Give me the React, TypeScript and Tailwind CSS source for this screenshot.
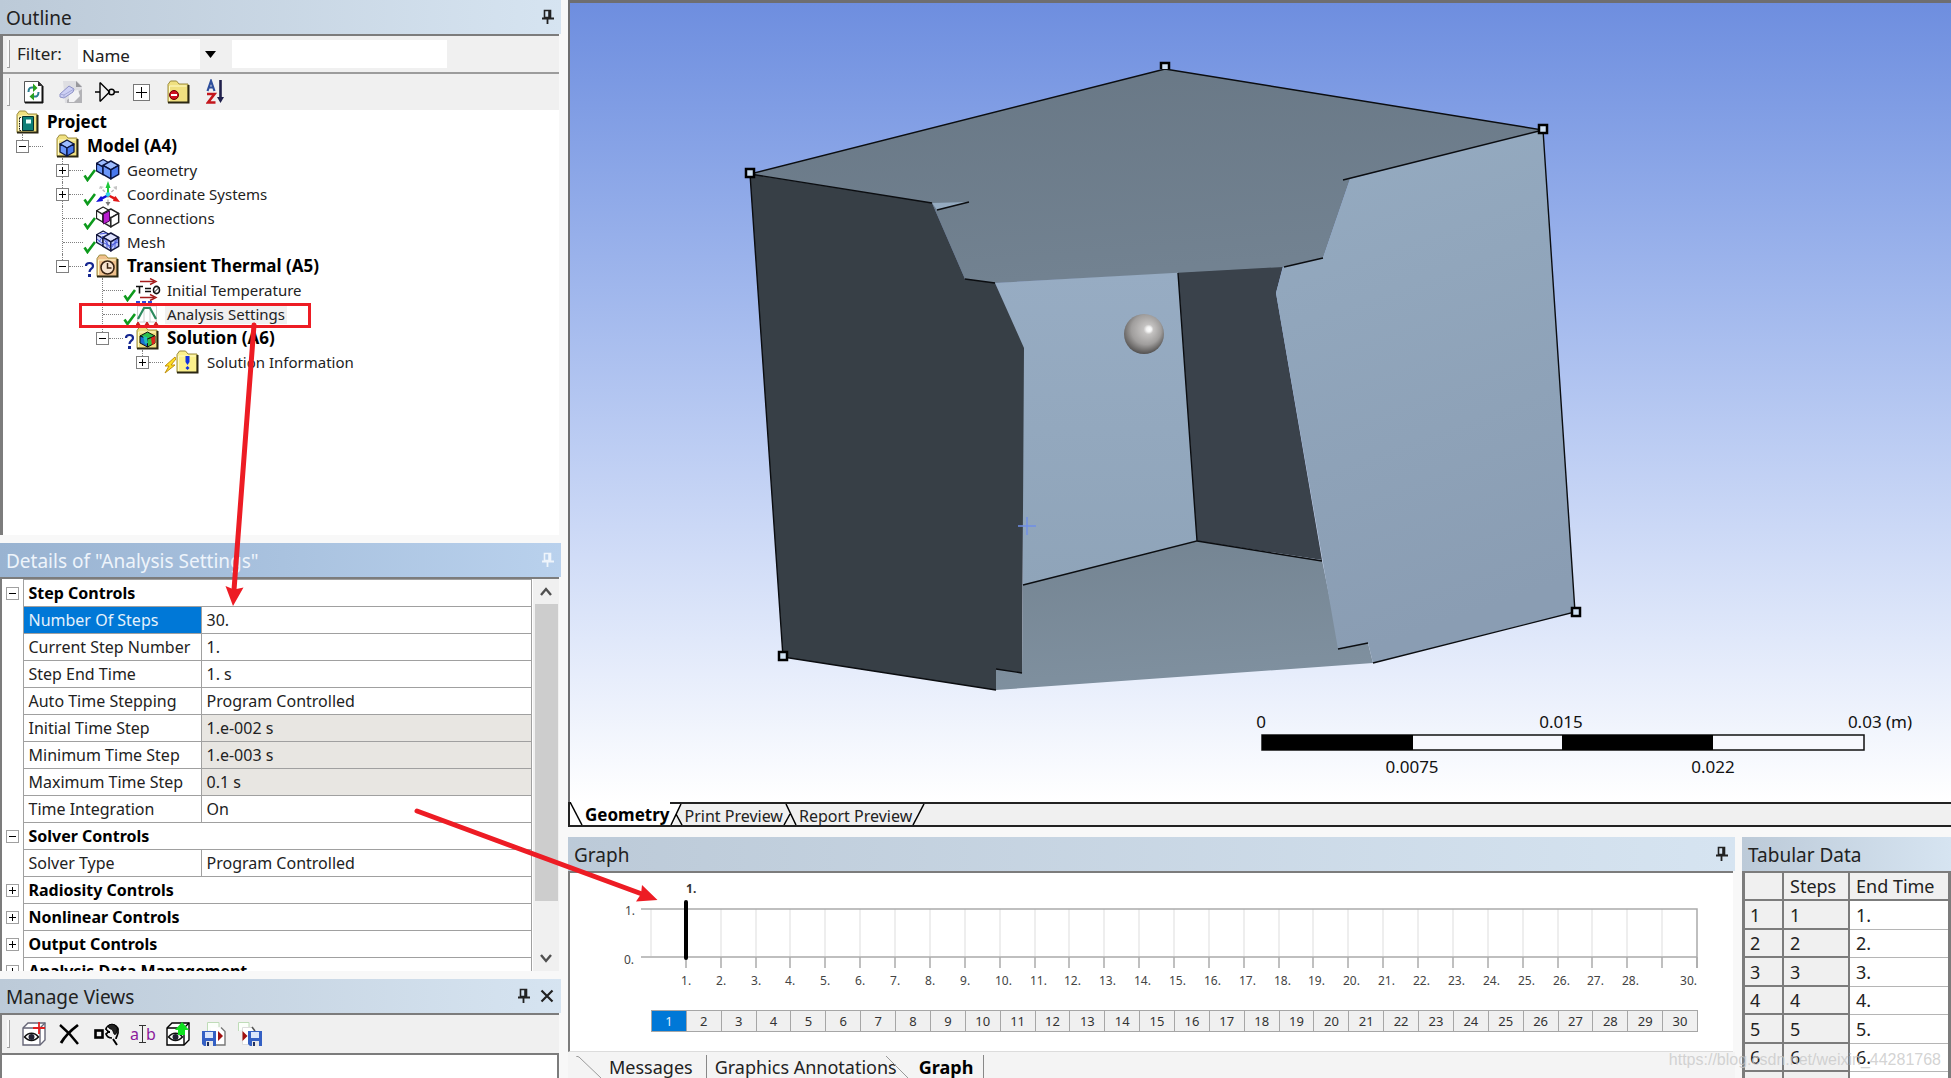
import { useState } from "react";

const UI = "font-['Noto_Sans','Noto_Sans_CJK_SC',sans-serif]";

const STEPS = Array.from({ length: 30 }, (_, i) => i + 1);

const PinIcon = () => (
  <svg width="12" height="16" viewBox="0 0 12 16" fill="none" stroke="currentColor">
    <path d="M2.5 1.5h6v7h-6z" strokeWidth="1.6" />
    <path d="M7.5 1v8" strokeWidth="2.6" />
    <path d="M0 9.5h12M5.5 10v5" strokeWidth="1.8" />
  </svg>
);

const CloseIcon = () => (
  <svg width="14" height="14" viewBox="0 0 14 14" stroke="currentColor" strokeWidth="2.2">
    <path d="M1.5 1.5l11 11M12.5 1.5l-11 11" />
  </svg>
);

const PanelTitle = ({ text, active, pin, close }: any) => (
  <div
    className={
      active
        ? "h-[34px] shrink-0 flex items-center gap-[10px] pl-[6px] pr-[7px] text-[#eef4fb] bg-linear-to-r from-[#99b3d1] to-[#b9d1ed]"
        : "h-[34px] shrink-0 flex items-center gap-[10px] pl-[6px] pr-[7px] text-[#222] bg-linear-to-r from-[#bccad8] to-[#d6e4f1]"
    }
  >
    <h2 className="flex-1 pt-[2px] text-[19px] leading-6 whitespace-nowrap">{text}</h2>
    {pin && (
      <button type="button" title="Pin">
        <PinIcon />
      </button>
    )}
    {close && (
      <button type="button" title="Close">
        <CloseIcon />
      </button>
    )}
  </div>
);

const Grip = () => (
  <div className="w-[3px] h-7 shrink-0 border-r border-b border-[#a0a0a0] bg-[#fafafa]" />
);

const Expander = ({ open, small }: any) => (
  <svg width="13" height="13" viewBox="0 0 13 13" className="relative shrink-0 block" shapeRendering="crispEdges">
    <rect x="0.5" y="0.5" width="12" height="12" fill="#fff" stroke={small ? "#a0a0a0" : "#808080"} />
    <path d={open ? "M3 6.5h7" : "M3 6.5h7M6.5 3v7"} stroke="#000" />
  </svg>
);

/* ---------- toolbar icons ---------- */

const RefreshIcon = () => (
  <svg width="24" height="24" viewBox="0 0 24 24" fill="none">
    <path d="M1.5 1.5h14l4 4v17h-18z" fill="#fff" stroke="#555" />
    <path d="M19.5 6v17M2 22.5h18" stroke="#111" strokeWidth="2" />
    <path d="M15 1v5h5z" fill="#333" />
    <path d="M5.5 12c0-4 2-5 5-4.5" stroke="#2a7f8f" strokeWidth="2" />
    <path d="M10 3.5l4.5 4.5-4.5 4z" fill="#2aa01e" />
    <path d="M15.5 12c0 4-2 5-5 4.5" stroke="#2a7f8f" strokeWidth="2" />
    <path d="M11 12.5l-4.5 4 4.5 4z" fill="#2aa01e" />
  </svg>
);

const EraserIcon = () => (
  <svg width="24" height="24" viewBox="0 0 24 24">
    <path d="M4 1h14l5 5v17H6z" fill="#dedee2" />
    <path d="M17 1v6h6z" fill="#97979c" />
    <path d="M8 23h15V9L8 20z" fill="#b2b2b6" />
    <path d="M10 22V12l9-2 2 6-6 6z" fill="#f2f2f4" />
    <path d="M1 14L10 6l5 3-1 3-9 6-4-1z" fill="#cdd0f4" stroke="#8c90c6" />
    <path d="M1 14l4 1 10-6M5 15v3" stroke="#a5a9d8" fill="none" />
  </svg>
);

const GateIcon = () => (
  <svg width="24" height="24" viewBox="0 0 24 24" fill="none" stroke="#000" strokeWidth="1.4">
    <path d="M0 12h5M5 2.5v19M5 2.5l9.5 9.5L5 21.5M19 12h5" />
    <circle cx="16.5" cy="12" r="2.8" />
  </svg>
);

const ExpandAllIcon = () => (
  <svg width="17" height="17" viewBox="0 0 17 17" shapeRendering="crispEdges">
    <rect x="0.5" y="0.5" width="16" height="16" fill="#fff" stroke="#777" />
    <path d="M3 8.5h11M8.5 3v11" stroke="#000" />
  </svg>
);

const Folder = ({ fill = "#f0e080", children }: any) => (
  <svg width="24" height="24" viewBox="0 0 24 24" className="block shrink-0">
    <path d="M1 22.5V4.5L3.5 1h6l2.5 3h9v18.5z" fill={fill} stroke="#9a8a3c" />
    <path d="M21.5 5v17.5H1" fill="none" stroke="#2b2712" strokeWidth="2" />
    <path d="M2.5 21V6h17" fill="none" stroke="#fffbc8" />
    {children}
  </svg>
);

const SortIcon = () => (
  <svg width="20" height="26" viewBox="0 0 20 26" fill="none">
    <path d="M1.5 12L5 2l3.5 10M3 8.5h4.5" stroke="#2f4f9c" strokeWidth="2.2" />
    <path d="M1 15h7.5l-6.5 8.5h7.5" stroke="#c4161c" strokeWidth="2.6" />
    <path d="M14.5 1v20" stroke="#20204c" strokeWidth="2.6" />
    <path d="M11 18h7l-3.5 6z" fill="#20204c" />
  </svg>
);

/* ---------- tree icons ---------- */

const Cube = ({ x = 0, y = 0, s = 1, top = "#9dbcff", left = "#6b97fa", right = "#4878ee", stroke = "#0a1440" }: any) => (
  <g transform={`translate(${x} ${y}) scale(${s})`} stroke={stroke} strokeWidth="1.3" strokeLinejoin="round">
    <path d="M0 4L7 0l7 4-7 4z" fill={top} />
    <path d="M0 4l7 4v8l-7-4z" fill={left} />
    <path d="M14 4L7 8v8l7-4z" fill={right} />
  </g>
);

const ProjectIcon = () => (
  <Folder>
    <path d="M3.5 7.5h3v13h-3z" fill="#fff" stroke="#222" strokeDasharray="1.5 1" />
    <path d="M6.5 6.5h11v14h-11z" fill="#0d7f78" stroke="#07302e" />
    <path d="M10 9.5h5v4h-5z" fill="#e6fffb" />
  </Folder>
);

const ModelIcon = () => (
  <Folder>
    <Cube x={4} y={6} s={1} />
  </Folder>
);

const GeometryIcon = () => (
  <svg width="24" height="24" viewBox="0 0 24 24">
    <Cube x={0.5} y={1.5} s={0.95} />
    <Cube x={7} y={3} s={1.12} />
  </svg>
);

const CoordIcon = () => (
  <svg width="24" height="26" viewBox="0 0 24 26" fill="none">
    <path d="M12 14L5 7M12 14l8-7M12 14v8" stroke="#b5b5b5" strokeWidth="1.3" strokeDasharray="3 1.5" />
    <path d="M3 8l1-3 4 1zM17 6l4-1v4z" fill="#c4c4c4" />
    <path d="M11 13V7h-1.5L12 0l2.5 7H13v6z" fill="#1fc83a" />
    <path d="M12 13l-6 3-1-1-5 6 7-1-.5-1.5 6.500-3.500z" fill="#1010d8" />
    <path d="M12 13l6.500 3 1-1 4.500 6-7-1 .5-1.500-6-3.500z" fill="#e01818" />
    <circle cx="12" cy="13.5" r="2.2" fill="#35d6e8" />
    <path d="M9.5 21h5L12 25z" fill="#777" />
  </svg>
);

const ConnectionsIcon = () => (
  <svg width="24" height="24" viewBox="0 0 24 24">
    <Cube x={0.5} y={1} s={0.95} top="#fff" left="#fff" right="#fff" stroke="#222" />
    <Cube x={7} y={3} s={1.12} top="#fff" left="#e2e2e2" right="#fff" stroke="#222" />
    <path d="M7.5 8l6-3v10l-6 3z" fill="#b91fd0" stroke="#4a0854" />
  </svg>
);

const MeshIcon = () => (
  <svg width="24" height="24" viewBox="0 0 24 24">
    <Cube x={0.5} y={1} s={0.95} top="#dfe3ff" left="#d0d6fd" right="#bcc5fb" stroke="#12163c" />
    <Cube x={7} y={3} s={1.12} top="#dfe3ff" left="#d0d6fd" right="#bcc5fb" stroke="#12163c" />
    <path d="M1 9l6 5M4 4l7-1M8 13l6 3M11 10v8M19 10v8M15 15l7-3M3 12l4-6M8 9l6 9M15 18l7-9" stroke="#4656d8" fill="none" />
  </svg>
);

const ThermalIcon = () => (
  <Folder fill="#efc08c">
    <circle cx="11.5" cy="13.5" r="6.5" fill="#f7e3cf" stroke="#3a2412" strokeWidth="1.6" />
    <path d="M11.5 9v5h4" fill="none" stroke="#3a2412" strokeWidth="1.5" />
  </Folder>
);

const InitialTempIcon = () => (
  <svg width="25" height="24" viewBox="0 0 25 24" fill="none">
    <path d="M4 3.5h14M4 19.5h14" stroke="#a51c1c" strokeWidth="1.4" />
    <path d="M14 .5l6 3-6 3M14 16.5l6 3-6 3" stroke="#a51c1c" strokeWidth="1.4" />
    <path d="M0 8.5h7M3.5 8.5v7M9 10.5h6M9 13.5h6" stroke="#111" strokeWidth="1.6" />
    <ellipse cx="20.5" cy="12" rx="3" ry="3.6" stroke="#111" strokeWidth="1.6" />
    <path d="M17.5 15l6-6" stroke="#111" />
  </svg>
);

const AnalysisIcon = () => (
  <svg width="24" height="26" viewBox="0 0 24 26" fill="none">
    <path d="M0 1h16" stroke="#2d4bd8" strokeWidth="2" strokeDasharray="4 2" />
    <path d="M1.5 5h19v16h-19zM8 5v16M14 5v16" stroke="#d0d0d0" />
    <path d="M2 18l6-11h6l6 11" stroke="#2c8a5e" strokeWidth="2.2" />
    <path d="M0 24l2-3 2 3zM9 24l2-3 2 3zM18 24l2-3 2 3z" fill="#c81e1e" stroke="#c81e1e" />
  </svg>
);

const SolutionIcon = () => (
  <Folder>
    <path d="M4 10l7.5-4 7.5 4-7.5 3z" fill="#2fc04a" stroke="#111" />
    <path d="M4 10l7.5 3v8L4 17z" fill="#1b6fd0" stroke="#111" />
    <path d="M19 10l-7.5 3v8l7.5-4z" fill="#37c23a" stroke="#111" />
    <path d="M15 12l4-2v7l-3 2z" fill="#d8261c" />
    <path d="M7 10l4 1 1 6-3 1z" fill="#20c0b8" />
  </Folder>
);

const InfoIcon = () => (
  <Folder fill="#fbf08c">
    <path d="M9.5 6h4v6l-2 3-2-3z" fill="#1030e0" />
    <path d="M11.5 16l2 2-2 2-2-2z" fill="#1030e0" />
  </Folder>
);

const CheckMark = () => (
  <svg width="13" height="24" viewBox="0 0 13 24" fill="none">
    <path d="M1.5 17.5l3 4.5L12 12" stroke="#0d9a1c" strokeWidth="2.6" />
  </svg>
);

const Question = () => (
  <svg width="13" height="24" viewBox="0 0 13 24" fill="none">
    <path d="M3 12c0-4 7-4 7 0 0 3-3.5 2.5-3.5 6" stroke="#14268f" strokeWidth="2.2" />
    <path d="M5 20h3v3H5z" fill="#14268f" />
  </svg>
);

const Bolt = () => (
  <svg width="13" height="24" viewBox="0 0 13 24">
    <path d="M12 7L2 16h4l-4 7 10-8H8l5-6z" fill="#ffdf20" stroke="#c09010" />
  </svg>
);

const statusIcons: any = { ok: <CheckMark />, todo: <Question />, bolt: <Bolt />, none: null };

const TREE = [
  { label: "Project", level: 0, icon: <ProjectIcon />, bold: true },
  { label: "Model (A4)", level: 1, icon: <ModelIcon />, bold: true, box: "open", last: true, status: "none" },
  { label: "Geometry", level: 2, icon: <GeometryIcon />, box: "closed", status: "ok" },
  { label: "Coordinate Systems", level: 2, icon: <CoordIcon />, box: "closed", status: "ok" },
  { label: "Connections", level: 2, icon: <ConnectionsIcon />, status: "ok" },
  { label: "Mesh", level: 2, icon: <MeshIcon />, status: "ok" },
  { label: "Transient Thermal (A5)", level: 2, icon: <ThermalIcon />, bold: true, box: "open", last: true, status: "todo" },
  { label: "Initial Temperature", level: 3, icon: <InitialTempIcon />, status: "ok" },
  { label: "Analysis Settings", level: 3, icon: <AnalysisIcon />, status: "ok", selected: true },
  { label: "Solution (A6)", level: 3, icon: <SolutionIcon />, bold: true, box: "open", last: true, status: "todo" },
  { label: "Solution Information", level: 4, icon: <InfoIcon />, box: "closed", last: true, status: "bolt" },
];

const TreeRow = ({ item }: any) => (
  <li className="h-6 flex items-center">
    {Array.from({ length: Math.max(item.level - 1, 0) }, (_, i) => (
      <span key={i} className="w-10 shrink-0" />
    ))}
    {item.level > 0 && (
      <span className="relative w-10 h-6 shrink-0 flex items-center">
        <span
          className={
            item.last
              ? "absolute left-[6px] top-0 h-3 border-l border-dotted border-[#808080]"
              : "absolute left-[6px] top-0 h-6 border-l border-dotted border-[#808080]"
          }
        />
        {item.box ? <Expander open={item.box === "open"} /> : <span className="w-[13px]" />}
        <span
          className={
            item.box
              ? "w-[14px] border-t border-dotted border-[#808080]"
              : "w-5 -ml-[6px] border-t border-dotted border-[#808080]"
          }
        />
        <span className="w-[13px]">{statusIcons[item.status]}</span>
      </span>
    )}
    <span className="w-[29px] shrink-0">{item.icon}</span>
    <span
      className={
        item.bold
          ? "px-[2px] text-[17px] leading-6 font-bold text-black whitespace-nowrap"
          : item.selected
            ? "px-[2px] text-[15px] leading-5 text-[#222] bg-[#f0f0f0] whitespace-nowrap"
            : "px-[2px] text-[15px] leading-6 text-[#222] whitespace-nowrap"
      }
    >
      {item.label}
    </span>
  </li>
);

const Outline = () => (
  <section className="flex-1 min-h-0 flex flex-col">
    <PanelTitle text="Outline" pin />
    <div className="mr-[2px] flex-1 min-h-0 flex flex-col border-l-3 border-t-2 border-[#7c7c7c] bg-white">
      <div className="h-[38px] shrink-0 flex items-center pl-1 bg-[#f0f0f0] border-b-2 border-[#9c9c9c]">
        <Grip />
        <label htmlFor="filter" className="w-[68px] pl-[7px] text-[17px] leading-6 text-[#222]">
          Filter:
        </label>
        <span className="relative flex">
          <select
            id="filter"
            className="w-[142px] h-[30px] pl-1 pt-1 bg-white text-[17px] leading-6 text-[#222] appearance-none outline-none"
          >
            <option>Name</option>
          </select>
          <span className="absolute right-0 top-0 h-[30px] w-5 bg-[#f0f0f0] flex items-center justify-center pointer-events-none">
            <svg width="11" height="7" viewBox="0 0 11 7">
              <path d="M0 0h11L5.5 7z" />
            </svg>
          </span>
        </span>
        <input type="text" aria-label="Filter text" className="ml-3 w-[215px] h-7 px-1 bg-white outline-none" />
      </div>
      <div className="h-[36px] shrink-0 flex items-center pl-1 bg-[#f0f0f0]">
        <Grip />
        <div className="flex items-center pl-[13px]">
          <button type="button" title="Refresh" className="w-9"><RefreshIcon /></button>
          <button type="button" title="Clear" className="w-9"><EraserIcon /></button>
          <button type="button" title="Filter" className="w-9"><GateIcon /></button>
          <button type="button" title="Expand" className="w-9 pl-[2px]"><ExpandAllIcon /></button>
          <button type="button" title="Hide folders" className="w-9">
            <Folder>
              <circle cx="7" cy="15" r="4.5" fill="#d01020" stroke="#600" />
              <path d="M4 15h6" stroke="#fff" strokeWidth="2" />
            </Folder>
          </button>
          <button type="button" title="Sort" className="w-9 pl-[3px]"><SortIcon /></button>
        </div>
      </div>
      <ul className="pl-[13px]">
        {TREE.map((item, index) => (
          <TreeRow key={index} item={item} />
        ))}
      </ul>
    </div>
  </section>
);

const DETAILS = [
  { group: "Step Controls", open: true },
  { name: "Number Of Steps", value: "30.", selected: true },
  { name: "Current Step Number", value: "1." },
  { name: "Step End Time", value: "1. s" },
  { name: "Auto Time Stepping", value: "Program Controlled" },
  { name: "Initial Time Step", value: "1.e-002 s", readOnly: true },
  { name: "Minimum Time Step", value: "1.e-003 s", readOnly: true },
  { name: "Maximum Time Step", value: "0.1 s", readOnly: true },
  { name: "Time Integration", value: "On" },
  { group: "Solver Controls", open: true },
  { name: "Solver Type", value: "Program Controlled" },
  { group: "Radiosity Controls" },
  { group: "Nonlinear Controls" },
  { group: "Output Controls" },
  { group: "Analysis Data Management" },
];

const Details = () => (
  <section className="h-[428px] shrink-0 flex flex-col">
    <PanelTitle text={'Details of "Analysis Settings"'} active pin />
    <div className="mr-[2px] flex-1 min-h-0 flex border-l-2 border-t-2 border-[#7c7c7c] bg-white overflow-hidden">
      <div className="flex-1 overflow-hidden">
        <table className="w-full table-fixed border-collapse text-[16px] leading-6 text-[#222]">
          <colgroup>
            <col className="w-[21px]" />
            <col className="w-[178px]" />
            <col />
          </colgroup>
          <tbody>
            {DETAILS.map((row: any, index) =>
              row.group ? (
                <tr key={index} className="h-[27px]">
                  <td className="p-0 pl-1"><Expander open={row.open} small /></td>
                  <td colSpan={2} className="p-0 pl-[5px] border border-[#a0a0a0] font-bold text-black whitespace-nowrap">
                    {row.group}
                  </td>
                </tr>
              ) : (
                <tr key={index} className="h-[27px]">
                  <td className="p-0" />
                  <td
                    className={
                      row.selected
                        ? "p-0 pl-[5px] border border-[#a0a0a0] bg-[#0078d7] text-[#e4f1fc] whitespace-nowrap"
                        : "p-0 pl-[5px] border border-[#a0a0a0] whitespace-nowrap"
                    }
                  >
                    {row.name}
                  </td>
                  <td
                    className={
                      row.readOnly
                        ? "p-0 pl-[5px] border border-[#a0a0a0] bg-[#e8e6e2] whitespace-nowrap"
                        : "p-0 pl-[5px] border border-[#a0a0a0] whitespace-nowrap"
                    }
                  >
                    {row.value}
                  </td>
                </tr>
              )
            )}
          </tbody>
        </table>
      </div>
      <div className="w-[26px] ml-[1px] shrink-0 flex flex-col items-center bg-[#f0f0f0]">
        <button type="button" title="Scroll up" className="h-[25px]">
          <svg width="12" height="9" viewBox="0 0 12 9" fill="none" stroke="#505050" strokeWidth="2.4">
            <path d="M1 8l5-6 5 6" />
          </svg>
        </button>
        <div className="h-[297px] w-[23px] bg-[#cdcdcd]" />
        <button type="button" title="Scroll down" className="mt-auto h-[25px]">
          <svg width="12" height="9" viewBox="0 0 12 9" fill="none" stroke="#505050" strokeWidth="2.4">
            <path d="M1 1l5 6 5-6" />
          </svg>
        </button>
      </div>
    </div>
  </section>
);

/* ---------- manage views icons ---------- */

const ViewBox = ({ stroke = "#667", children }: any) => (
  <svg width="24" height="24" viewBox="0 0 24 24" fill="none">
    <path d="M1 6l5-5h17v17l-5 5H1z" fill="#fff" stroke={stroke} strokeWidth="1.4" />
    <path d="M1 6h17v17M18 6l5-5" stroke={stroke} strokeWidth="1.4" />
    <path d="M2.5 15c4-5 10-5 14 0-4 4.5-10 4.5-14 0z" stroke="#111" strokeWidth="1.5" />
    <circle cx="9.5" cy="15" r="3" fill="#223" />
    {children}
  </svg>
);

const Floppy = ({ x }: any) => (
  <g transform={`translate(${x} 9)`}>
    <path d="M0 0h14v15H2l-2-2z" fill="#3460c4" />
    <path d="M3 1h8v6H3z" fill="#dbe6fb" />
    <path d="M4 10h7v5H4z" fill="#e8e8e8" />
    <path d="M5 11h2v4H5z" fill="#203060" />
  </g>
);

const ExportIcon = () => (
  <svg width="24" height="24" viewBox="0 0 24 24">
    <path d="M5.5 9V.5H17V5" fill="#fbfffa" stroke="#bfdcb8" />
    <path d="M9 5.5h10l4 4v13.5H9z" fill="#fff" />
    <path d="M19 5.5l4 4v13.5H13" fill="none" stroke="#777" strokeWidth="1.4" />
    <Floppy x={0} />
    <path d="M16 9l5 5-5 5z" fill="#a01010" />
  </svg>
);

const ImportIcon = () => (
  <svg width="24" height="24" viewBox="0 0 24 24">
    <path d="M.5 9V.5H11V5" fill="#fbfffa" stroke="#bfdcb8" />
    <path d="M4.5 5.5H14l3 4v13H4.5z" fill="#fff" stroke="#ddd" />
    <path d="M14 5l3 4" stroke="#555" strokeWidth="1.6" />
    <Floppy x={10} />
    <path d="M4.5 9l5 5-5 5z" fill="#a01010" />
  </svg>
);

const ManageViews = () => (
  <section className="h-[99px] shrink-0 flex flex-col">
    <PanelTitle text="Manage Views" pin close />
    <div className="mr-[2px] flex-1 flex flex-col border-l-2 border-t-2 border-[#7c7c7c] bg-[#f0f0f0]">
      <div className="h-[38px] shrink-0 flex items-center pl-[5px]">
        <Grip />
        <div className="flex items-center pl-3">
          <button type="button" title="Create a view" className="w-9">
            <ViewBox>
              <path d="M17 0v12M11 6h12" stroke="#e02020" strokeWidth="1.8" />
            </ViewBox>
          </button>
          <button type="button" title="Delete a view" className="w-9">
            <svg width="24" height="24" viewBox="0 0 24 24" fill="none" stroke="#000">
              <path d="M2 3c6 5 12 11 18 19" strokeWidth="2.4" />
              <path d="M20 3C12 9 7 14 3 21" strokeWidth="2.8" />
            </svg>
          </button>
          <button type="button" title="Apply a view" className="w-9">
            <svg width="26" height="24" viewBox="0 0 26 24" fill="none" stroke="#000">
              <rect x="1.5" y="8.5" width="7" height="7" strokeWidth="2.6" />
              <path d="M12 8c0-7 12-7 12 0 1 5-2 6-2 9M12 8c3 0 2 3 0 4 1 3 4 4 6 4" strokeWidth="1.7" />
              <path d="M14 4c4-4 10-1 9 6-2 4-3 3-4-1-1-3-4-1-5-5z" fill="#222" />
              <path d="M19 17l4 6M13 10h3" strokeWidth="2" />
            </svg>
          </button>
          <button type="button" title="Rename" className="w-9 text-[16px] leading-6 text-[#8b1a9b] flex items-center">
            a
            <svg width="7" height="20" viewBox="0 0 7 20" stroke="#333" fill="none">
              <path d="M0 1.5h7M3.5 1.5v17M0 18.5h7" />
            </svg>
            b
          </button>
          <button type="button" title="Replace view" className="w-9">
            <ViewBox stroke="#000">
              <path d="M12 13V8H9l7-8 7 8h-4v5z" fill="#10e020" />
            </ViewBox>
          </button>
          <button type="button" title="Export" className="w-9"><ExportIcon /></button>
          <button type="button" title="Import" className="w-9"><ImportIcon /></button>
        </div>
      </div>
      <div className="flex-1 border-t-2 border-r-2 border-[#7c7c7c] bg-white" />
    </div>
  </section>
);

/* ---------- 3D viewport ---------- */

const Vertex = ({ x, y }: any) => (
  <rect x={x - 4} y={y - 4} width="8" height="8" fill="#cfe0f2" stroke="#000" strokeWidth="2.5" />
);

const Viewport = () => (
  <div className="flex-1 min-h-0 border-l-2 border-t-3 border-[#6e6e70] bg-linear-to-b from-[#6e8edf] to-white overflow-hidden">
    <svg width="1381" height="799" viewBox="570 3 1381 799" className="block max-w-none">
      <defs>
        <linearGradient id="topFace" x1="0" y1="0" x2="0.3" y2="1">
          <stop offset="0" stopColor="#687785" />
          <stop offset="1" stopColor="#728291" />
        </linearGradient>
        <linearGradient id="sideFace" x1="0" y1="0" x2="0.2" y2="1">
          <stop offset="0" stopColor="#95abc1" />
          <stop offset="1" stopColor="#8a9db3" />
        </linearGradient>
        <linearGradient id="backWall" x1="0" y1="0" x2="0" y2="1">
          <stop offset="0" stopColor="#97acc3" />
          <stop offset="1" stopColor="#8fa4b9" />
        </linearGradient>
        <linearGradient id="floor" x1="0" y1="0" x2="0.2" y2="1">
          <stop offset="0" stopColor="#748492" />
          <stop offset="1" stopColor="#7f909f" />
        </linearGradient>
        <radialGradient id="ball" cx="0.5" cy="0.4" r="0.62" fx="0.64" fy="0.38">
          <stop offset="0" stopColor="#ffffff" />
          <stop offset="0.1" stopColor="#f4f4f4" />
          <stop offset="0.2" stopColor="#c4c2c1" />
          <stop offset="0.6" stopColor="#a09e9d" />
          <stop offset="1" stopColor="#4c4a49" />
        </radialGradient>
      </defs>
      <path d="M995 283L1178 272L1197 541L1023 585V348z" fill="url(#backWall)" />
      <path d="M1178 272L1283 266L1276 293L1322 560L1197 541z" fill="#3a424b" />
      <path d="M1197 541L1023 585L1022 673L996 669V690L1373 663L1368 643L1340 649L1322 560z" fill="url(#floor)" />
      <path d="M750 174L1165 69L1543 130L1350 179L1323 258L1283 267L995 283L965 279L932 203z" fill="url(#topFace)" />
      <path d="M932 203L969 202L937 210z" fill="#95abc1" />
      <path d="M750 174L932 203L965 279L995 283L1024 348L1022 673L996 669V690L783 657z" fill="#373f46" />
      <path d="M1543 130L1350 179L1323 258L1283 267L1276 293L1338 649L1368 643L1373 663L1575 612z" fill="url(#sideFace)" />
      <path
        d="M783 657L750 174L1165 69L1543 130L1575 612L1373 663M750 174L932 203M937 210L969 202M965 279L995 283M1543 130L1343 180M1323 258L1284 267M1178 273L1197 541L1023 585M1197 541L1322 561M1022 673L996 669M783 657L996 690M1338 649L1368 643"
        fill="none"
        stroke="#0b0d10"
        strokeWidth="1.4"
      />
      <circle cx="1144" cy="334" r="20" fill="url(#ball)" />
      <path d="M1018 526h18M1027 517v18" stroke="#6f8fe8" strokeWidth="1.4" />
      <Vertex x={750} y={173} />
      <path d="M1161 69v-6h8v6" fill="#cfe0f2" stroke="#000" strokeWidth="2.5" />
      <Vertex x={1543} y={129} />
      <Vertex x={783} y={656} />
      <Vertex x={1576} y={612} />
      <rect x="1262" y="735" width="602" height="15" fill="#f7f8fe" stroke="#111" strokeWidth="1.5" />
      <path d="M1262 735h151v15h-151zM1562 735h151v15h-151z" />
      <g fontSize="17" textAnchor="middle" fill="#111" className="font-['Noto_Sans',sans-serif]">
        <text x="1261" y="728">0</text>
        <text x="1561" y="728">0.015</text>
        <text x="1880" y="728">0.03 (m)</text>
        <text x="1412" y="773">0.0075</text>
        <text x="1713" y="773">0.022</text>
      </g>
    </svg>
  </div>
);

const ViewTabs = () => (
  <div className="h-[25px] shrink-0 flex items-stretch border-y-2 border-l-2 border-[#222] bg-[#f0f0f0]">
    <svg width="15" height="23" viewBox="0 0 15 23" fill="none" stroke="#000" strokeWidth="1.5" className="-mt-[2px] bg-white">
      <path d="M0 0l12 23" />
    </svg>
    <button type="button" className="-mt-[2px] pt-[2px] bg-white text-[17px] leading-5 font-bold text-black">
      Geometry
    </button>
    <svg width="15" height="21" viewBox="0 0 15 21" fill="none" stroke="#000" strokeWidth="1.5">
      <path d="M0 0h11L3 21H0z" fill="#fff" stroke="none" />
      <path d="M1 21L11 0M6 10l6 11" />
    </svg>
    <button type="button" className="text-[16px] leading-6 text-[#222] whitespace-nowrap">Print Preview</button>
    <svg width="16" height="21" viewBox="0 0 16 21" fill="none" stroke="#000" strokeWidth="1.5">
      <path d="M3 0l10 21M1 21L7 10" />
    </svg>
    <button type="button" className="text-[16px] leading-6 text-[#222] whitespace-nowrap">Report Preview</button>
    <svg width="16" height="21" viewBox="0 0 16 21" fill="none" stroke="#000" strokeWidth="1.5">
      <path d="M1 21L12 0" />
    </svg>
  </div>
);

/* ---------- graph ---------- */

const X0 = 81;
const STEP = 1046 / 30;
const at = (n: number) => Math.round(X0 + n * STEP);

const Graph = ({ current, setCurrent }: any) => (
  <section className="flex-1 min-w-0 flex flex-col">
    <PanelTitle text="Graph" pin />
    <div className="mr-[2px] h-[181px] shrink-0 border-l-2 border-t-2 border-b border-b-[#dcdcdc] border-[#7c7c7c] bg-white overflow-hidden">
      <svg width="1160" height="137" viewBox="0 0 1160 137" className="block max-w-none">
        <g stroke="#e9e9e9" strokeWidth="1.5">
          {STEPS.map((n) => (
            <path key={n} d={`M${at(n - 1)} 36v47`} />
          ))}
        </g>
        <path d={`M71 36H${at(30)}V95M71 84H${at(30)}`} fill="none" stroke="#ababab" strokeWidth="1.5" />
        <g stroke="#ababab" strokeWidth="1.5">
          {STEPS.map((n) => (
            <path key={n} d={`M${at(n)} 84v11`} />
          ))}
        </g>
        <path d={`M${at(current)} 29v56`} stroke="#000" strokeWidth="4" strokeLinecap="round" />
        <g fontSize="12" fill="#444" className="font-['Noto_Sans',sans-serif]">
          <text x={at(current)} y="20" fontWeight="bold" fill="#333">{current}.</text>
          <text x="55" y="42">1.</text>
          <text x="54" y="91">0.</text>
          {STEPS.filter((n) => n !== 29).map((n) => (
            <text key={n} x={n === 30 ? at(n) : at(n) - 5} y="112" textAnchor={n === 30 ? "end" : "start"}>
              {n}.
            </text>
          ))}
        </g>
      </svg>
      <div className="ml-[81px] w-[1047px] h-[22px] grid grid-cols-[repeat(30,minmax(0,1fr))] border-l border-y border-[#a6a6a6]">
        {STEPS.map((n) => (
          <button
            key={n}
            type="button"
            onClick={() => setCurrent(n)}
            className={
              n === current
                ? "bg-[#0078d7] text-[#e4f1fc] text-[13px] leading-5 border-r border-[#a6a6a6]"
                : "bg-[#f0f0f0] text-[#333] text-[13px] leading-5 border-r border-[#a6a6a6]"
            }
          >
            {n}
          </button>
        ))}
      </div>
    </div>
    <div className="flex-1 min-h-0 flex items-center pt-1 bg-[#f4f4f4] text-[18px] leading-6 text-[#222] whitespace-nowrap">
      <svg width="41" height="22" viewBox="0 0 41 22" fill="none" stroke="#999">
        <path d="M8 0l3 1 22 21" />
      </svg>
      <button type="button" className="h-6 pr-[13px] border-r border-[#888]">Messages</button>
      <button type="button" className="h-6 pl-2">Graphics Annotations</button>
      <svg width="26" height="22" viewBox="0 0 26 22" fill="none" stroke="#999" className="-ml-[12px]">
        <path d="M1 0l22 22" />
      </svg>
      <button type="button" className="h-6 pl-2 pr-[10px] border-r border-[#888] font-bold text-black">Graph</button>
    </div>
  </section>
);

const TabularData = () => (
  <section className="w-[209px] shrink-0 flex flex-col overflow-hidden">
    <PanelTitle text="Tabular Data" />
    <div className="flex-1 border-l-3 border-t-2 border-r-3 border-[#7c7c7c]">
      <table className="w-full table-fixed border-collapse text-[18px] leading-6 text-[#222]">
        <colgroup>
          <col className="w-[38px]" />
          <col className="w-[66px]" />
          <col />
        </colgroup>
        <thead>
          <tr className="h-[27px] bg-[#f0f0f0] text-left">
            <th className="p-0 border-b-2 border-r-2 border-[#7c7c7c]" />
            <th className="p-0 pl-[6px] font-normal border-b-2 border-r-2 border-[#7c7c7c]">Steps</th>
            <th className="p-0 pl-[6px] font-normal border-b-2 border-[#7c7c7c] whitespace-nowrap">End Time</th>
          </tr>
        </thead>
        <tbody>
          {STEPS.slice(0, 7).map((n) => (
            <tr key={n} className="odd:h-[29px] even:h-[28px]">
              <td className="p-0 pl-[5px] bg-[#f0f0f0] border-b-2 border-r-2 border-[#7c7c7c]">{n}</td>
              <td className="p-0 pl-[6px] bg-[#f0f0f0] border-b-2 border-r-2 border-[#7c7c7c]">{n}</td>
              <td className="p-0 pl-[6px] bg-white border-b border-[#b5b5b5]">{n}.</td>
            </tr>
          ))}
        </tbody>
      </table>
    </div>
  </section>
);

const Annotations = () => (
  <svg className="absolute left-0 top-0 pointer-events-none" width="700" height="940" viewBox="0 0 700 940" fill="none">
    <g stroke="#ed1c24">
      <rect x="80.5" y="304.5" width="229" height="22" strokeWidth="3" />
      <path d="M254 325L234 590" strokeWidth="5" strokeLinecap="round" />
      <path d="M417 811L642 894" strokeWidth="5" strokeLinecap="round" />
    </g>
    <path d="M233 606L225.5 586L234 589.5L243.5 587.5z" fill="#ed1c24" />
    <path d="M657.5 900L636 901.5L641 894L642 885z" fill="#ed1c24" />
  </svg>
);

const App = () => {
  const [current, setCurrent] = useState(1);

  return (
    <main className={`relative flex h-screen overflow-hidden bg-[#f8f8f8] ${UI}`}>
      <div className="w-[561px] shrink-0 flex flex-col gap-2">
        <Outline />
        <Details />
        <ManageViews />
      </div>
      <div className="flex-1 min-w-0 ml-[7px] flex flex-col">
        <Viewport />
        <ViewTabs />
        <div className="mt-[10px] h-[241px] shrink-0 flex gap-[7px]">
          <Graph current={current} setCurrent={setCurrent} />
          <TabularData />
        </div>
      </div>
      <Annotations />
      <p className="absolute right-[10px] bottom-[6px] text-[16px] leading-6 text-[#c8c8c8]/80 pointer-events-none font-['Liberation_Sans',sans-serif]">
        https://blog.csdn.net/weixin_44281768
      </p>
    </main>
  );
};

export default App;
